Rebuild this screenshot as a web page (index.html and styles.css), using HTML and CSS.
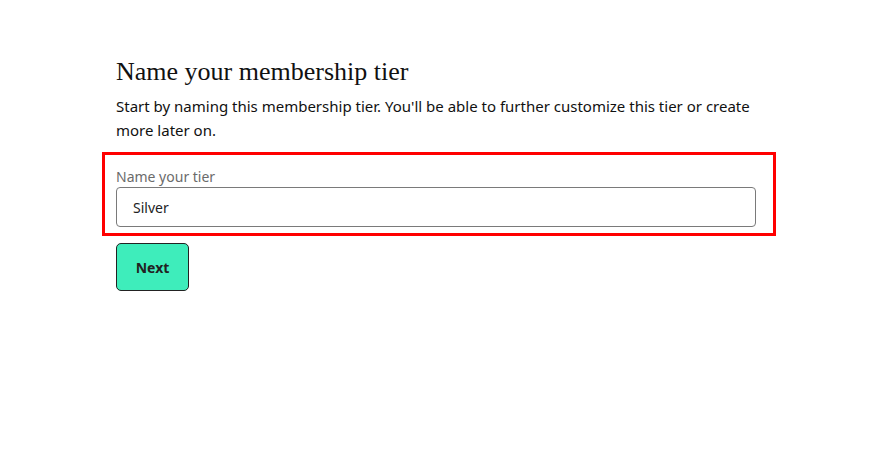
FILE: index.html
```html
<!DOCTYPE html>
<html lang="en">
<head>
<meta charset="utf-8">
<link rel="stylesheet" href="styles.css">
</head>
<body>
<main class="page">
  <h1 class="title">Name your membership tier</h1>
  <p class="intro">Start by naming this membership tier. You'll be able to further customize this tier or create more later on.</p>
  <div class="highlight">
    <label class="field-label" for="tier">Name your tier</label>
    <input class="field-input" id="tier" type="text" value="Silver">
  </div>
  <button class="next-btn" type="button">Next</button>
</main>
</body>
</html>
```

FILE: styles.css
```css
html, body {
  margin: 0;
  padding: 0;
  background: #ffffff;
}
body {
  font-family: "Noto Sans", "Open Sans", sans-serif;
  color: #111111;
}
.page {
  width: 640px;
  padding: 56px 0 0 116px;
  display: flex;
  flex-direction: column;
  align-items: flex-start;
}
.title {
  font-family: "Liberation Serif", "DejaVu Serif", serif;
  font-weight: 400;
  font-size: 26px;
  line-height: 32px;
  margin: 0;
  color: #111111;
}
.intro {
  margin: 6px 0 0 0;
  font-size: 15px;
  line-height: 24px;
  color: #111111;
}
.highlight {
  margin: 10px 0 0 -14px;
  border: 3px solid #ff0000;
  padding: 12px 17px 6px 11px;
  width: 640px;
  display: flex;
  flex-direction: column;
}
.field-label {
  font-size: 14px;
  line-height: 20px;
  color: #6b6b6b;
}
.field-input {
  margin: 0;
  box-sizing: border-box;
  width: 640px;
  height: 40px;
  border: 1px solid #7a7a7a;
  border-radius: 4px;
  padding: 0 16px;
  font-family: inherit;
  font-size: 14px;
  color: #222222;
  background: #ffffff;
}
.next-btn {
  margin-top: 7px;
  width: 73px;
  height: 48px;
  background: #3eedbb;
  border: 1px solid #222222;
  border-radius: 5px;
  font-family: inherit;
  font-weight: 700;
  font-size: 14px;
  color: #222222;
  cursor: pointer;
}
```
